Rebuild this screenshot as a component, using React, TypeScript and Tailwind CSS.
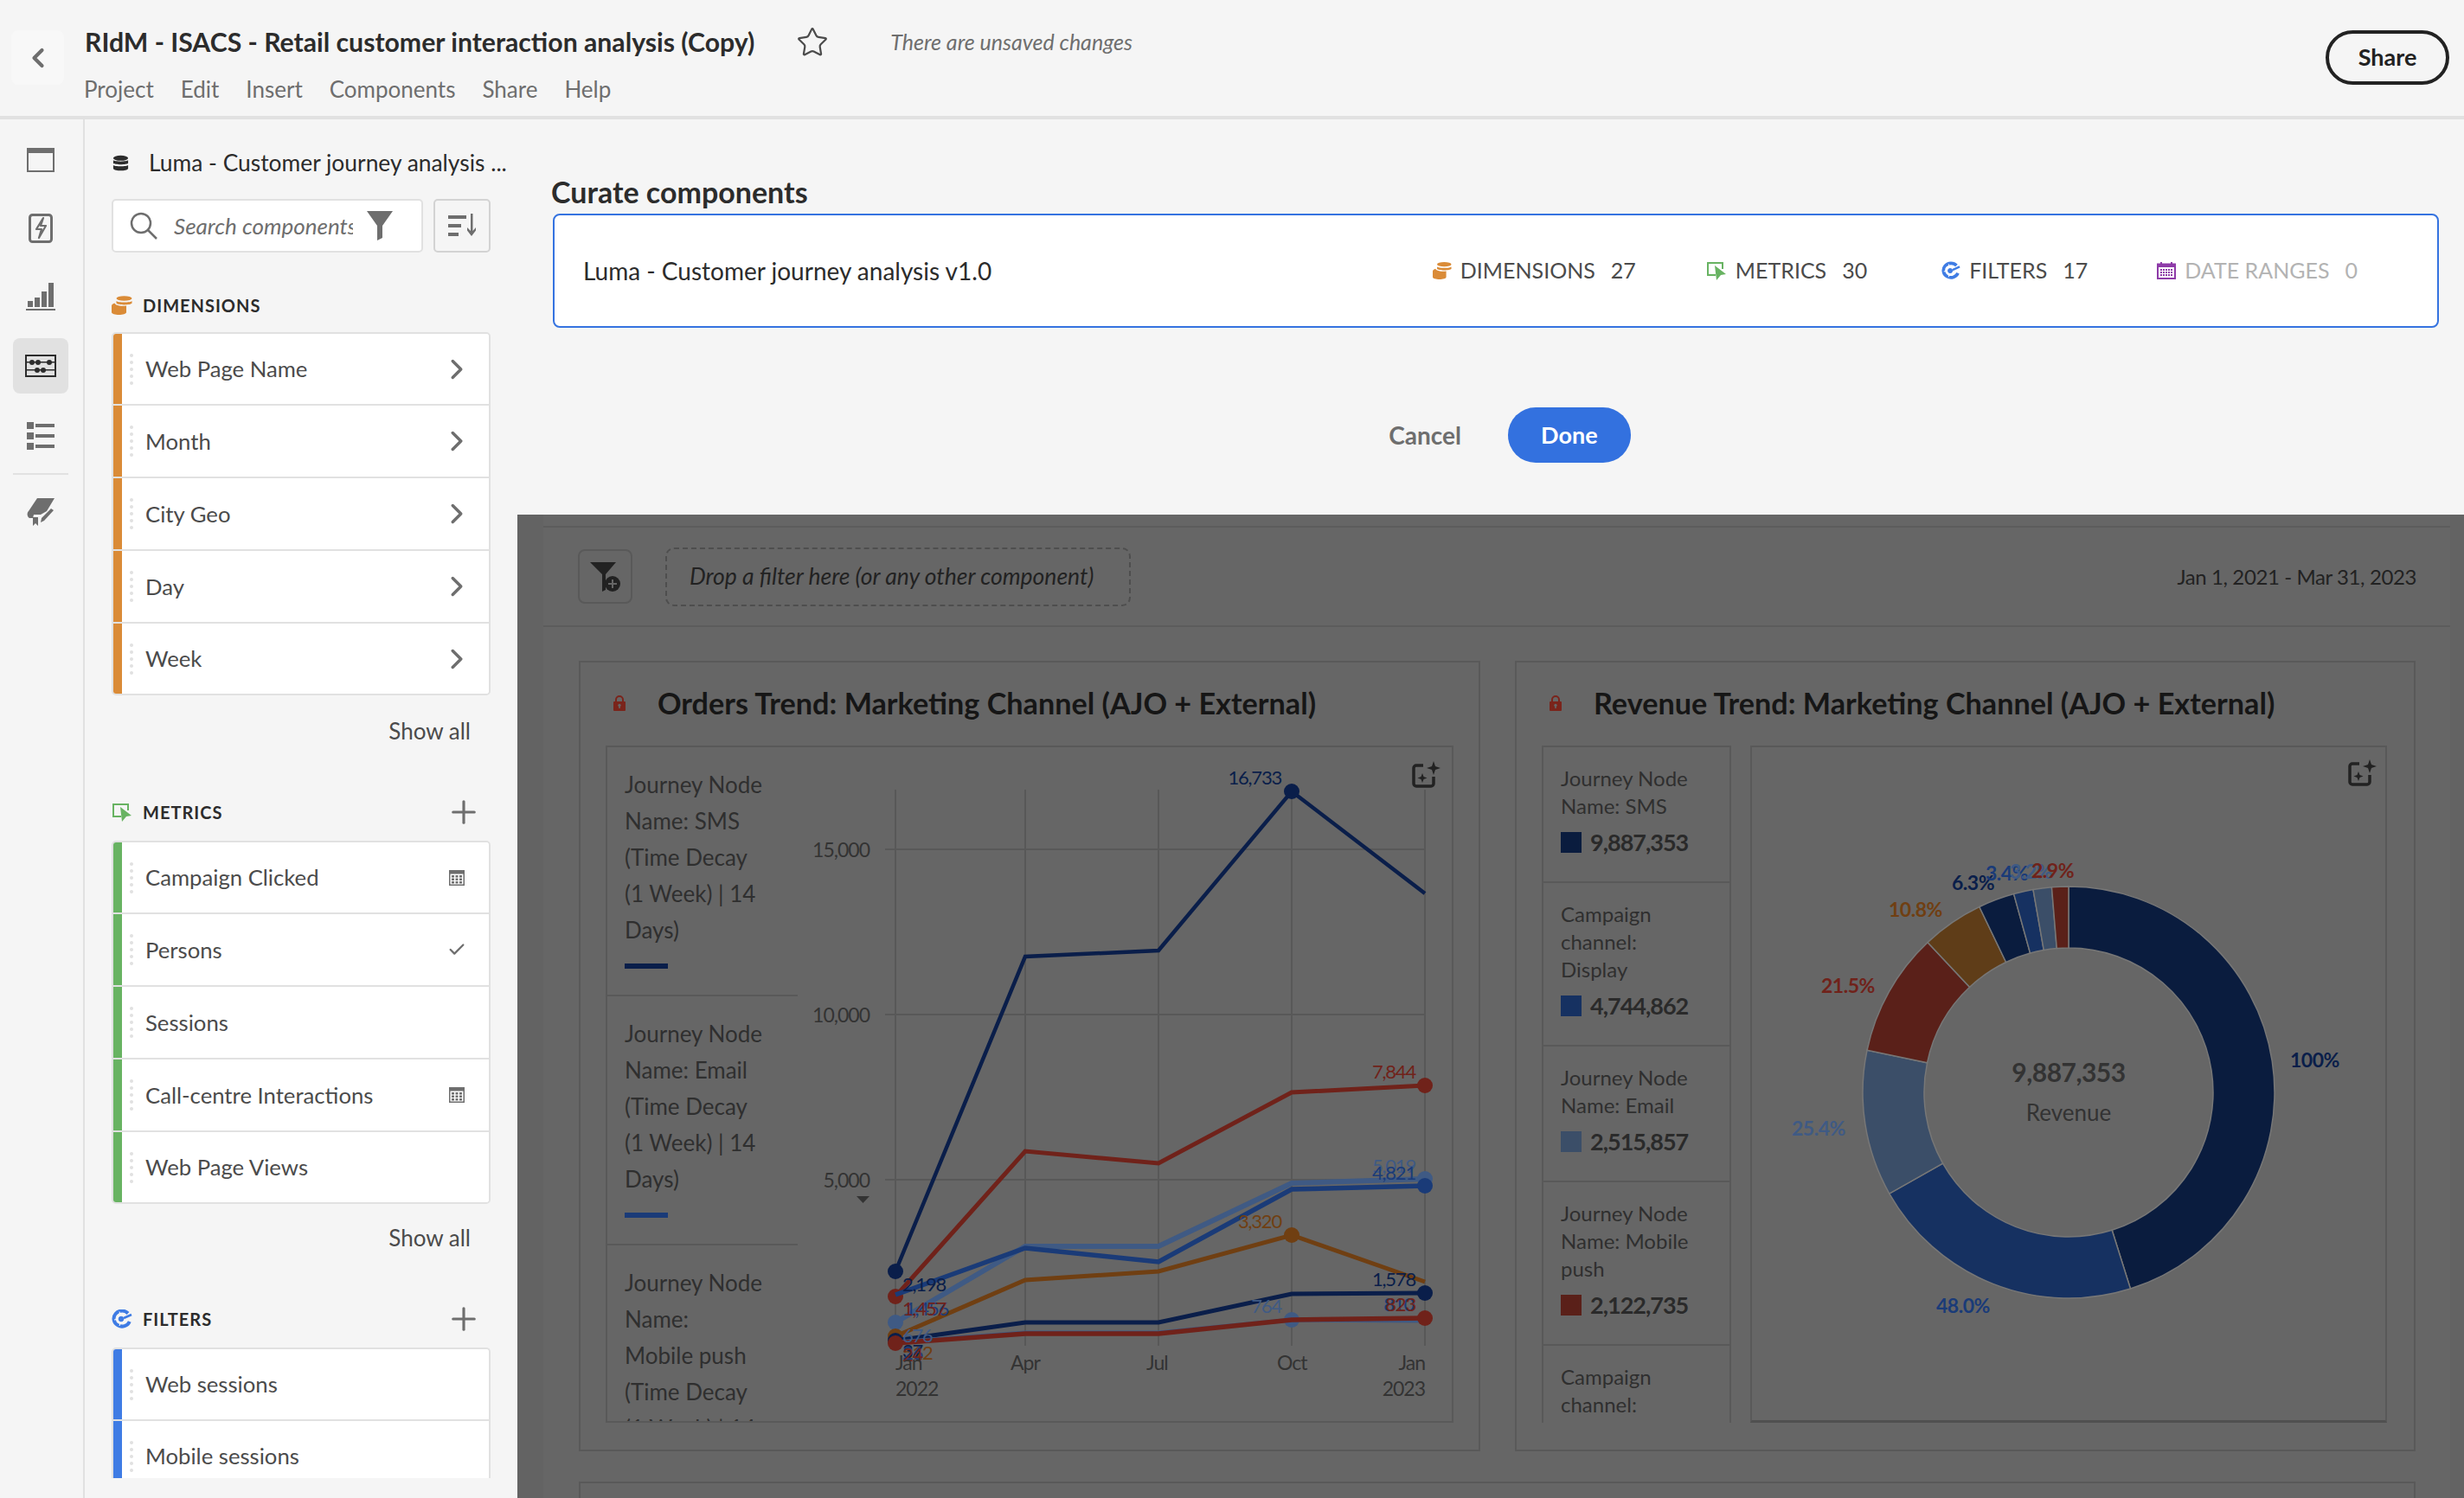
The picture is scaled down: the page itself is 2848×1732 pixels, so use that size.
import React from 'react';
import { ChevronLeft, ChevronRight, Star, Plus, Check } from 'lucide-react';

const NAVY = '#0a1e4a';
const BLUE = '#1a3b78';
const LIGHT = '#3f5a84';
const RED = '#70221a';
const ORANGE = '#703f12';

const DbIcon = ({ className = '' }: { className?: string }) => (
  <svg viewBox="0 0 22 20" className={className} fill="currentColor">
    <ellipse cx="11" cy="3.5" rx="9" ry="3.2" />
    <path d="M2 6.2c1.5 1.8 16.500 1.800 18 0v3.600c-1.500 2-16.500 2-18 0z" />
    <path d="M2 12c1.500 1.800 16.500 1.800 18 0v4.200c-1.500 3.200-16.500 3.200-18 0z" />
  </svg>
);

const DimIcon = ({ className = '' }: { className?: string }) => (
  <svg viewBox="0 0 24 22" className={className} fill="#da8b37">
    <ellipse cx="14.500" cy="3" rx="9" ry="2.800" />
    <path d="M5.500 6c2 2 16.500 2 18 0v2.500c-1.500 2.500-16.500 2.500-18 0z" />
    <path d="M3.500 8.500c.4 1.600 3 2.600 5.500 3 2.500.4 5 .4 8 0V19c0 4-17 4-17 0v-7.500c0-1.200 1.500-2.500 3.500-3z" />
  </svg>
);

const MetricIcon = ({ className = '' }: { className?: string }) => (
  <svg viewBox="0 0 24 22" className={className}>
    <path d="M11 16H2V2h17v7" fill="none" stroke="#68b362" strokeWidth="2" />
    <path d="M10 5l13 10-6 1-5 6z" fill="#68b362" />
  </svg>
);

const FilterIcon = ({ className = '' }: { className?: string }) => (
  <svg viewBox="0 0 24 22" className={className} fill="none" stroke="#3f7ce4">
    <path d="M19 4.500A9.500 9 0 1 0 20.800 14" strokeWidth="4" />
    <path d="M9 2.500l1 3M3 12l3-.5M9 19l1-3" stroke="#fff" strokeWidth="1" />
    <circle cx="11" cy="11" r="2.800" fill="#3f7ce4" strokeWidth="1" />
    <path d="M14 10l9-4" strokeWidth="2.500" />
  </svg>
);

const CalendarIcon = ({ className = '' }: { className?: string }) => (
  <svg viewBox="0 0 22 20" className={className}>
    <path d="M5 0v3M17 0v3" stroke="#8e3ba8" strokeWidth="2" />
    <rect x="1" y="2.500" width="20" height="16.500" fill="none" stroke="#8e3ba8" strokeWidth="2" />
    <rect x="1" y="2.500" width="20" height="3.500" fill="#8e3ba8" />
    <path d="M4 9h14M4 12h14M4 15h14" stroke="#8e3ba8" strokeWidth="2" strokeDasharray="2 1" />
  </svg>
);

const CalcIcon = () => (
  <svg viewBox="0 0 18 18" className="h-[18px] w-[18px]" fill="#6e6e6e">
    <path d="M0 0h18v18H0zm1.500 4.500V16.500h15V4.500z" fillRule="evenodd" />
    <path d="M3 6h3v2.500H3zM7.500 6h3v2.500h-3zM12 6h3v2.500h-3zM3 9.500h3v2.500H3zM7.500 9.500h3v2.500h-3zM12 9.500h3v2.500h-3zM3 13h3v2.500H3zM7.500 13h3v2.500h-3zM12 13h3v2.500h-3z" />
  </svg>
);

const AiIcon = ({ x, y }: { x: number; y: number }) => (
  <g transform={`translate(${x} ${y})`} fill="none" stroke="#222" strokeWidth="3.500">
    <path d="M14 5H6a3 3 0 0 0-3 3v18a3 3 0 0 0 3 3h17a3 3 0 0 0 3-3V18" />
    <path d="M26 0l2 6 6 2-6 2-2 6-2-6-6-2 6-2z" fill="#222" stroke="none" />
    <path d="M13 14l1.500 4 4 1.500-4 1.500-1.500 4-1.500-4-4-1.500 4-1.500z" fill="#222" stroke="none" />
  </g>
);

const Lock = () => (
  <svg viewBox="0 0 16 20" className="h-[20px] w-[16px]">
    <path d="M4 9V6a4 4 0 0 1 8 0v3" fill="none" stroke="#7a241b" strokeWidth="2" />
    <path d="M2 8h12a1 1 0 0 1 1 1v9a1 1 0 0 1-1 1H2a1 1 0 0 1-1-1V9a1 1 0 0 1 1-1z" fill="#7a241b" />
    <circle cx="8" cy="12.500" r="1.700" fill="#666" />
    <path d="M7.200 13h1.600v3H7.200z" fill="#666" />
  </svg>
);

const Row = ({ color, label, icon }: { color: string; label: string; icon?: React.ReactNode }) => (
  <div className="flex h-[84px] shrink-0 items-stretch border-b-2 border-[#e1e1e1] bg-white first:h-[83px] last:h-[81px] last:border-b-0">
    <div className="w-[10px]" style={{ backgroundColor: color }} />
    <div className="ml-[9px] flex flex-col justify-center gap-[4px]">
      <span className="size-[4px] rounded-full bg-[#e1e1e1]" />
      <span className="size-[4px] rounded-full bg-[#e1e1e1]" />
      <span className="size-[4px] rounded-full bg-[#e1e1e1]" />
      <span className="size-[4px] rounded-full bg-[#e1e1e1]" />
      <span className="size-[4px] rounded-full bg-[#e1e1e1]" />
    </div>
    <span className="ml-[14px] self-center text-[25.7px] text-[#4b4b4b]">{label}</span>
    <span className="ml-auto mr-[26px] flex w-[22px] items-center justify-center text-[#6e6e6e]">{icon}</span>
  </div>
);

const SectionHead = ({ icon, label, add }: { icon: React.ReactNode; label: string; add?: boolean }) => (
  <div className="flex h-[24px] items-center">
    {icon}
    <span className="ml-[12px] text-[20px] font-bold tracking-[1px] text-[#2c2c2c]">{label}</span>
    {add && <Plus className="ml-auto mr-[10px] size-[42px] text-[#6e6e6e]" strokeWidth={1.8} />}
  </div>
);

const Chevron = () => <ChevronRight className="size-[38px] shrink-0" strokeWidth={2.2} />;

const Sidebar = () => (
  <aside className="flex h-full w-[500px] shrink-0 flex-col pl-[31px] pr-[31px] pt-[38px]">
    <div className="flex h-[26px] items-center">
      <DbIcon className="h-[20px] w-[21px] shrink-0 text-[#2c2c2c]" />
      <span className="ml-[22px] whitespace-nowrap text-[26.4px] text-[#2c2c2c]">Luma - Customer journey analysis ...</span>
    </div>
    <div className="mt-[28px] flex h-[62px] gap-[12px]">
      <div className="flex w-[360px] items-center rounded-[5px] border-2 border-[#e1e1e1] bg-white pl-[19px]">
        <svg viewBox="0 0 32 32" className="size-[32px]" fill="none" stroke="#6e6e6e" strokeWidth="2.500">
          <circle cx="13" cy="13" r="11" />
          <path d="M21 21l10 10" />
        </svg>
        <span className="ml-[19px] w-[207px] overflow-hidden whitespace-nowrap text-[26px] italic text-[#6e6e6e]">Search components</span>
        <svg viewBox="0 0 30 34" className="ml-[16px] h-[34px] w-[30px]" fill="#6e6e6e">
          <path d="M0 0h30L18 17v14l-6 3V17z" />
        </svg>
      </div>
      <div className="flex w-[66px] items-center justify-center rounded-[5px] border-2 border-[#d3d3d3]">
        <svg viewBox="0 0 32 28" className="h-[28px] w-[32px]" fill="#6e6e6e">
          <path d="M0 2h21v4H0zM0 12h15v4H0zM0 22h12v4H0z" />
          <path d="M26 0h2.500v20l3.500-4v3.500L27 26l-5-6.500V16l4 4z" />
        </svg>
      </div>
    </div>
    <div className="mt-[49px]">
      <SectionHead icon={<DimIcon className="h-[22px] w-[24px]" />} label="DIMENSIONS" />
    </div>
    <div className="mt-[19px] overflow-hidden rounded-[5px] border-2 border-[#e1e1e1]">
      <Row color="#da8b37" label="Web Page Name" icon={<Chevron />} />
      <Row color="#da8b37" label="Month" icon={<Chevron />} />
      <Row color="#da8b37" label="City Geo" icon={<Chevron />} />
      <Row color="#da8b37" label="Day" icon={<Chevron />} />
      <Row color="#da8b37" label="Week" icon={<Chevron />} />
    </div>
    <div className="mt-[23px] pr-[23px] text-right text-[26px] leading-[36px] text-[#4b4b4b]">Show all</div>
    <div className="mt-[64px]">
      <SectionHead icon={<MetricIcon className="h-[22px] w-[24px]" />} label="METRICS" add />
    </div>
    <div className="mt-[21px] overflow-hidden rounded-[5px] border-2 border-[#e1e1e1]">
      <Row color="#68b362" label="Campaign Clicked" icon={<CalcIcon />} />
      <Row color="#68b362" label="Persons" icon={<Check className="size-[22px] shrink-0" strokeWidth={2.5} />} />
      <Row color="#68b362" label="Sessions" />
      <Row color="#68b362" label="Call-centre Interactions" icon={<CalcIcon />} />
      <Row color="#68b362" label="Web Page Views" />
    </div>
    <div className="mt-[21px] pr-[23px] text-right text-[26px] leading-[36px] text-[#4b4b4b]">Show all</div>
    <div className="mt-[64px]">
      <SectionHead icon={<FilterIcon className="h-[22px] w-[24px]" />} label="FILTERS" add />
    </div>
    <div className="mt-[21px] h-[151px] overflow-hidden rounded-t-[5px] border-x-2 border-t-2 border-[#e1e1e1]">
      <Row color="#3f7ce4" label="Web sessions" />
      <div className="h-[84px]">
        <Row color="#3f7ce4" label="Mobile sessions" />
      </div>
    </div>
  </aside>
);

const railBtn = 'flex h-[64px] w-[64px] items-center justify-center rounded-[8px]';

const Rail = () => (
  <nav className="flex h-full w-[98px] shrink-0 flex-col items-center border-r-2 border-[#e1e1e1] pr-[2px] pt-[15px]">
    <div className={railBtn}>
      <svg viewBox="0 0 32 28" className="h-[28px] w-[32px]">
        <rect x="1" y="1" width="30" height="26" fill="none" stroke="#6e6e6e" strokeWidth="2" />
        <rect x="0" y="0" width="32" height="6" fill="#6e6e6e" />
      </svg>
    </div>
    <div className={`${railBtn} mt-[15px]`}>
      <svg viewBox="0 0 28 34" className="h-[34px] w-[28px]" fill="none" stroke="#6e6e6e" strokeWidth="3">
        <rect x="1.500" y="1.500" width="25" height="31" rx="3" />
        <path d="M17 5l-8 13h6l-3 10 8-14h-6z" strokeWidth="2.200" strokeLinejoin="round" />
      </svg>
    </div>
    <div className={`${railBtn} mt-[15px]`}>
      <svg viewBox="0 0 34 32" className="h-[32px] w-[34px]" fill="#6e6e6e">
        <rect x="2" y="21" width="6" height="7" />
        <rect x="10" y="17" width="6" height="11" />
        <rect x="18" y="10" width="6" height="18" />
        <rect x="26" y="0" width="6" height="28" />
        <rect x="0" y="30" width="34" height="2" />
      </svg>
    </div>
    <div className={`${railBtn} mt-[16px] bg-[#e1e1e1]`}>
      <svg viewBox="0 0 36 26" className="h-[26px] w-[36px]" fill="#2c2c2c">
        <path d="M0 0h36v26H0zm2 2v22h32V2z" fillRule="evenodd" />
        <path d="M2 8h32v1.500H2zM2 17h32v1.500H2z" />
        <circle cx="8" cy="9" r="3" /><circle cx="15" cy="9" r="3" /><circle cx="28" cy="9" r="3" />
        <circle cx="14" cy="18" r="3" /><circle cx="21" cy="18" r="3" />
      </svg>
    </div>
    <div className={`${railBtn} mt-[17px]`}>
      <svg viewBox="0 0 32 32" className="h-[32px] w-[32px]" fill="#6e6e6e">
        <path d="M0 0h8v8H0zM0 12h8v8H0zM0 24h8v8H0z" />
        <path d="M10 2h22v4H10zM10 14h22v4H10zM10 26h22v4H10z" />
      </svg>
    </div>
    <div className="mt-[11px] h-[2px] w-[64px] bg-[#e1e1e1]" />
    <div className={`${railBtn} mt-[11px]`}>
      <svg viewBox="0 0 32 32" className="h-[32px] w-[32px]" fill="#6e6e6e">
        <path d="M12 0h20l-9 15-7 4H8l-1 4H3c-3-2-3-6-1-8z" />
        <path d="M7 22h6v10l-3-3-3 3z" />
        <path d="M16 28l1-5L28 12l3 2-11 12z" />
      </svg>
    </div>
  </nav>
);

const Stat = ({ icon, label, n, dim, className = '' }: { icon: React.ReactNode; label: string; n: number; dim?: boolean; className?: string }) => (
  <div className={`flex items-center ${className} ${dim ? 'text-[#b3b3b3]' : 'text-[#4b4b4b]'}`}>
    {icon}
    <span className="ml-[10px] text-[25px]">{label}</span>
    <span className="ml-[18px] text-[25px]">{n}</span>
  </div>
);

const Curate = () => (
  <section className="h-[457px] shrink-0 pl-[41px] pr-[29px]">
    <h2 className="-ml-[2px] h-[109px] pt-[62px] text-[34px] font-bold leading-[44px] text-[#2c2c2c]">Curate components</h2>
    <div className="flex h-[132px] items-center rounded-[8px] border-2 border-[#3573e0] bg-white pl-[33px]">
      <span className="text-[28px] text-[#2c2c2c]">Luma - Customer journey analysis v1.0</span>
      <Stat className="ml-auto" icon={<DimIcon className="h-[22px] w-[22px]" />} label="DIMENSIONS" n={27} />
      <Stat className="ml-[81px]" icon={<MetricIcon className="h-[22px] w-[24px]" />} label="METRICS" n={30} />
      <Stat className="ml-[86px]" icon={<FilterIcon className="h-[22px] w-[22px]" />} label="FILTERS" n={17} />
      <Stat className="ml-[80px] mr-[92px]" dim icon={<CalendarIcon className="h-[20px] w-[22px]" />} label="DATE RANGES" n={0} />
    </div>
    <div className="mt-[92px] flex items-center justify-center gap-[54px] pl-[32px]">
      <span className="text-[28px] font-bold text-[#6e6e6e]">Cancel</span>
      <button className="h-[64px] w-[142px] rounded-full bg-[#3371df] text-[27px] font-bold text-white">Done</button>
    </div>
  </section>
);

const lineSeries = [
  { c: NAVY, w: 4.5, y: [1470, 1106, 1099, 915, 1033], dots: [0, 3] },
  { c: RED, w: 5, y: [1499, 1331, 1345, 1263, 1255], dots: [0, 4] },
  { c: LIGHT, w: 6, y: [1529, 1441, 1441, 1368, 1363], dots: [0, 4] },
  { c: BLUE, w: 5.5, y: [1497, 1443, 1459, 1375, 1371], dots: [4] },
  { c: ORANGE, w: 5, y: [1545, 1480, 1470, 1428, 1482], dots: [0, 3] },
  { c: NAVY, w: 5, y: [1550, 1529, 1529, 1496, 1495], dots: [0, 4] },
  { c: LIGHT, w: 5, y: [1552, 1541, 1541, 1526, 1527], dots: [3] },
  { c: RED, w: 5.5, y: [1553, 1542, 1542, 1526, 1524], dots: [0, 4] },
];
const xs = [1035, 1185, 1339, 1493, 1647];

const lineLabels: [string, number, number, string, 'start' | 'end'][] = [
  ['16,733', 1481, 898, NAVY, 'end'],
  ['7,844', 1636, 1238, RED, 'end'],
  ['5,019', 1636, 1347, LIGHT, 'end'],
  ['4,821', 1636, 1355, BLUE, 'end'],
  ['3,320', 1481, 1411, ORANGE, 'end'],
  ['1,578', 1636, 1478, NAVY, 'end'],
  ['764', 1481, 1509, LIGHT, 'end'],
  ['810', 1634, 1507, BLUE, 'end'],
  ['823', 1636, 1507, RED, 'end'],
  ['2,198', 1043, 1484, NAVY, 'start'],
  ['1,456', 1046, 1512, BLUE, 'start'],
  ['1,457', 1043, 1512, RED, 'start'],
  ['676', 1043, 1543, LIGHT, 'start'],
  ['512', 1043, 1563, ORANGE, 'start'],
  ['37', 1043, 1561, NAVY, 'start'],
  ['26', 1043, 1563, BLUE, 'start'],
  ['24', 1043, 1565, RED, 'start'],
];

const axisText = 'fill-[#333333] text-[23px] tracking-[-1px]';

const LineChart = () => (
  <svg viewBox="922 864 754 779" className="h-[779px] w-[754px]">
    {[982, 1173, 1364].map(y => <line key={y} x1={1023} x2={1647} y1={y} y2={y} stroke="#585858" strokeWidth="2" />)}
    {xs.map(x => <line key={x} x1={x} x2={x} y1={913} y2={1556} stroke="#585858" strokeWidth="2" />)}
    <text x={1005} y={982} dominantBaseline="central" textAnchor="end" className={axisText}>15,000</text>
    <text x={1005} y={1173} dominantBaseline="central" textAnchor="end" className={axisText}>10,000</text>
    <text x={1005} y={1364} dominantBaseline="central" textAnchor="end" className={axisText}>5,000</text>
    <path d="M990 1383h15l-7.500 8z" fill="#333" />
    {lineSeries.map((s, i) => (
      <g key={i}>
        <polyline points={s.y.map((y, j) => `${xs[j]},${y}`).join(' ')} fill="none" stroke={s.c} strokeWidth={s.w} />
        {s.dots.map(d => <circle key={d} cx={xs[d]} cy={s.y[d]} r="9" fill={s.c} />)}
      </g>
    ))}
    {lineLabels.map(([t, x, y, c, a], i) => (
      <text key={i} x={x} y={y} fill={c} textAnchor={a} dominantBaseline="central" className="text-[22px] tracking-[-1.2px]">{t}</text>
    ))}
    <text x={1035} y={1575} dominantBaseline="central" className={axisText}>Jan</text>
    <text x={1168} y={1575} dominantBaseline="central" className={axisText}>Apr</text>
    <text x={1325} y={1575} dominantBaseline="central" className={axisText}>Jul</text>
    <text x={1476} y={1575} dominantBaseline="central" className={axisText}>Oct</text>
    <text x={1647} y={1575} dominantBaseline="central" textAnchor="end" className={axisText}>Jan</text>
    <text x={1035} y={1605} dominantBaseline="central" className={axisText}>2022</text>
    <text x={1647} y={1605} dominantBaseline="central" textAnchor="end" className={axisText}>2023</text>
    <AiIcon x={1631} y={880} />
  </svg>
);

const slices = [
  { v: 100, c: '#0a1c3e' },
  { v: 48, c: '#163161' },
  { v: 25.4, c: '#3b4e68' },
  { v: 21.5, c: '#5a2019' },
  { v: 10.8, c: '#5f3d18' },
  { v: 6.3, c: '#0a1c3e' },
  { v: 3.4, c: '#163161' },
  { v: 3.2, c: '#3b4e68' },
  { v: 2.9, c: '#5a2019' },
];

function arc(a0: number, a1: number) {
  const cx = 2391, cy = 1265, R = 238, r = 167;
  const p = (rad: number, a: number) => `${cx + rad * Math.sin(a)} ${cy - rad * Math.cos(a)}`;
  const large = a1 - a0 > Math.PI ? 1 : 0;
  return `M${p(R, a0)}A${R} ${R} 0 ${large} 1 ${p(R, a1)}L${p(r, a1)}A${r} ${r} 0 ${large} 0 ${p(r, a0)}Z`;
}

const donutLabels: [string, number, number, string][] = [
  ['100%', 2647, 1227, NAVY],
  ['48.0%', 2238, 1511, BLUE],
  ['25.4%', 2071, 1306, LIGHT],
  ['21.5%', 2105, 1141, RED],
  ['10.8%', 2183, 1053, ORANGE],
  ['6.3%', 2256, 1022, NAVY],
  ['3.4%', 2295, 1011, BLUE],
  ['3.2%', 2323, 1009, LIGHT],
  ['2.9%', 2348, 1008, RED],
];

const Donut = () => {
  const total = slices.reduce((s, d) => s + d.v, 0);
  let a = 0;
  return (
    <svg viewBox="2025 866 732 779" className="h-[779px] w-[732px]">
      {slices.map((s, i) => {
        const a0 = a;
        a += (s.v / total) * Math.PI * 2;
        return <path key={i} d={arc(a0, a)} fill={s.c} stroke="#777" strokeWidth="1.500" />;
      })}
      {donutLabels.map(([t, x, y, c]) => (
        <text key={t} x={x} y={y} fill={c} dominantBaseline="central" className="text-[23px] font-bold tracking-[-0.5px]">{t}</text>
      ))}
      <text x={2391} y={1241} textAnchor="middle" dominantBaseline="central" className="fill-[#333333] text-[30px] font-bold tracking-[-0.5px]">9,887,353</text>
      <text x={2391} y={1288} textAnchor="middle" dominantBaseline="central" className="fill-[#333333] text-[26px]">Revenue</text>
      <AiIcon x={2713} y={880} />
    </svg>
  );
};

const orderLegend = [
  { t: ['Journey Node', 'Name: SMS', '(Time Decay', '(1 Week) | 14', 'Days)'], c: NAVY },
  { t: ['Journey Node', 'Name: Email', '(Time Decay', '(1 Week) | 14', 'Days)'], c: BLUE },
  { t: ['Journey Node', 'Name:', 'Mobile push', '(Time Decay', '(1 Week) | 14', 'Days)'], c: RED },
];

const revenueLegend = [
  { t: ['Journey Node', 'Name: SMS'], v: '9,887,353', c: '#0a1c3e' },
  { t: ['Campaign', 'channel:', 'Display'], v: '4,744,862', c: '#163161' },
  { t: ['Journey Node', 'Name: Email'], v: '2,515,857', c: '#3b4e68' },
  { t: ['Journey Node', 'Name: Mobile', 'push'], v: '2,122,735', c: '#5a2019' },
  { t: ['Campaign', 'channel:', 'Search'], v: '1,058,210', c: '#5f3d18' },
];

const ChartPanel = ({ title, children }: { title: string; children: React.ReactNode }) => (
  <div className="h-[914px] border-2 border-[#595959]">
    <div className="flex h-[96px] items-center pb-[2px] pl-[37px]">
      <Lock />
      <h3 className="ml-[36px] whitespace-nowrap text-[34.2px] font-bold text-[#161616]">{title}</h3>
    </div>
    {children}
  </div>
);

const Project = () => (
  <section className="min-h-0 flex-1 overflow-hidden bg-[#636363] pl-[30px] pr-[16px]">
    <div className="h-full bg-[#666666]">
      <div className="h-[13px]" />
      <div className="flex h-[117px] items-center justify-between border-y-2 border-[#5c5c5c] pl-[40px] pr-[39px]">
        <div className="flex items-center gap-[38px]">
          <div className="flex h-[63px] w-[63px] items-center justify-center rounded-[8px] border-2 border-[#595959]">
            <svg viewBox="0 0 36 34" className="h-[34px] w-[36px]">
              <path d="M0 0h30L18 14v18l-4 2V14z" fill="#222" />
              <circle cx="26" cy="25" r="9" fill="#222" />
              <path d="M26 20v10M21 25h10" stroke="#666" strokeWidth="2" />
            </svg>
          </div>
          <div className="flex h-[68px] w-[538px] items-center rounded-[10px] border-2 border-dashed border-[#4e4e4e] pl-[26px] text-[26.5px] italic text-[#222222]">
            Drop a filter here (or any other component)
          </div>
        </div>
        <span className="text-[24px] tracking-[-0.4px] text-[#222222]">Jan 1, 2021 - Mar 31, 2023</span>
      </div>
      <div className="grid grid-cols-[1042px_1041px] gap-x-[40px] gap-y-[35px] pl-[41px] pt-[39px]">
        <ChartPanel title="Orders Trend: Marketing Channel (AJO + External)">
          <div className="mx-[29px] flex h-[783px] border-2 border-[#595959]">
            <div className="h-full w-[220px] shrink-0 overflow-hidden">
              {orderLegend.map(l => (
                <div key={l.t.join(' ')} className="h-[288px] border-b-2 border-[#595959] pl-[20px] pt-[22px] text-[26px] leading-[42px] text-[#2f2f2f]">
                  {l.t.map(s => <div key={s}>{s}</div>)}
                  <div className="mt-[18px] h-[6px] w-[50px]" style={{ backgroundColor: l.c }} />
                </div>
              ))}
            </div>
            <LineChart />
          </div>
        </ChartPanel>
        <ChartPanel title="Revenue Trend: Marketing Channel (AJO + External)">
          <div className="ml-[29px] mr-[29px] flex h-[783px]">
            <div className="h-full w-[219px] shrink-0 overflow-hidden border-x-2 border-t-2 border-[#595959]">
              {revenueLegend.map(l => (
                <div key={l.v} className="border-b-2 border-[#595959] pb-[27px] pl-[20px] pr-[10px] pt-[20px] text-[24px] leading-[32px] text-[#2f2f2f]">
                  {l.t.map(s => <div key={s}>{s}</div>)}
                  <div className="mt-[8px] flex h-[36px] items-center gap-[10px]">
                    <span className="size-[24px]" style={{ backgroundColor: l.c }} />
                    <span className="text-[27px] font-bold tracking-[-1px] text-[#2a2a2a]">{l.v}</span>
                  </div>
                </div>
              ))}
            </div>
            <div className="ml-[22px] border-x-2 border-b-[3px] border-t-2 border-[#595959] border-b-[#505050]">
              <Donut />
            </div>
          </div>
        </ChartPanel>
        <div className="col-span-2 h-[60px] border-2 border-[#595959]" />
      </div>
    </div>
  </section>
);

export default function App() {
  return (
    <div className="flex h-[1732px] w-[2848px] flex-col overflow-hidden bg-[#f5f5f5] font-['Lato',sans-serif]">
      <header className="flex h-[138px] shrink-0 items-start border-b-4 border-[#e1e1e1]">
        <button className="ml-[13px] mt-[35px] flex h-[63px] w-[61px] items-center justify-center rounded-[8px] bg-[#f8f8f8] text-[#6e6e6e]">
          <ChevronLeft className="size-[36px]" strokeWidth={2.8} />
        </button>
        <div className="ml-[24px] pt-[28px]">
          <div className="flex h-[42px] items-center">
            <h1 className="whitespace-nowrap text-[30.2px] font-bold text-[#2c2c2c]">RIdM - ISACS - Retail customer interaction analysis (Copy)</h1>
            <Star className="ml-[48px] size-[38px] text-[#4b4b4b]" strokeWidth={1.4} />
            <span className="ml-[71px] text-[25px] italic text-[#6e6e6e]">There are unsaved changes</span>
          </div>
          <div className="-ml-[1px] mt-[12px] flex gap-[31px] text-[26px] leading-[42px] text-[#6e6e6e]">
            <span>Project</span>
            <span>Edit</span>
            <span>Insert</span>
            <span>Components</span>
            <span>Share</span>
            <span>Help</span>
          </div>
        </div>
        <button className="ml-auto mr-[17px] mt-[35px] h-[63px] w-[143px] rounded-full border-[4px] border-[#222222] text-[27px] font-bold text-[#222222]">Share</button>
      </header>
      <div className="flex min-h-0 flex-1">
        <Rail />
        <Sidebar />
        <main className="flex min-w-0 flex-1 flex-col">
          <Curate />
          <Project />
        </main>
      </div>
    </div>
  );
}
